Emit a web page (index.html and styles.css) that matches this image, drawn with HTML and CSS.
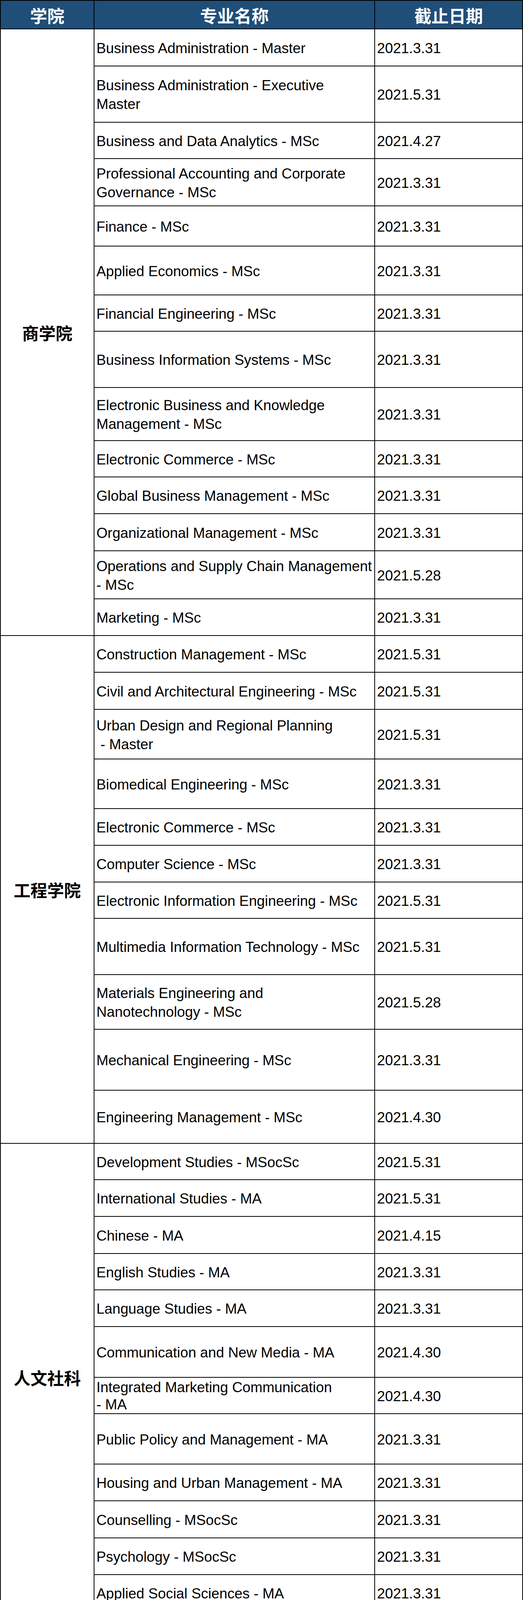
FILE: index.html
```html
<!DOCTYPE html>
<html lang="zh-CN">
<head>
<meta charset="utf-8">
<title>专业申请截止日期</title>
<link rel="stylesheet" href="styles.css">
</head>
<body>
<table class="deadlines">
  <colgroup>
    <col class="c-school">
    <col class="c-name">
    <col class="c-date">
  </colgroup>
  <thead>
    <tr class="head-row">
      <th>学院</th>
      <th>专业名称</th>
      <th>截止日期</th>
    </tr>
  </thead>
  <tbody>
    <tr class="h95"><td class="grp grp-lg" rowspan="14">商学院</td><td class="name">Business Administration - Master</td><td class="date">2021.3.31</td></tr>
    <tr class="h144"><td class="name">Business Administration - Executive<br>Master</td><td class="date">2021.5.31</td></tr>
    <tr class="h93"><td class="name">Business and Data Analytics - MSc</td><td class="date">2021.4.27</td></tr>
    <tr class="h121"><td class="name">Professional Accounting and Corporate<br>Governance - MSc</td><td class="date">2021.3.31</td></tr>
    <tr class="h103"><td class="name">Finance - MSc</td><td class="date">2021.3.31</td></tr>
    <tr class="h125"><td class="name">Applied Economics - MSc</td><td class="date">2021.3.31</td></tr>
    <tr class="h93"><td class="name">Financial Engineering - MSc</td><td class="date">2021.3.31</td></tr>
    <tr class="h144"><td class="name">Business Information Systems - MSc</td><td class="date">2021.3.31</td></tr>
    <tr class="h136"><td class="name">Electronic Business and Knowledge<br>Management - MSc</td><td class="date">2021.3.31</td></tr>
    <tr class="h93"><td class="name">Electronic Commerce - MSc</td><td class="date">2021.3.31</td></tr>
    <tr class="h94"><td class="name">Global Business Management - MSc</td><td class="date">2021.3.31</td></tr>
    <tr class="h95"><td class="name">Organizational Management - MSc</td><td class="date">2021.3.31</td></tr>
    <tr class="h123"><td class="name">Operations and Supply Chain Management<br>- MSc</td><td class="date">2021.5.28</td></tr>
    <tr class="h94"><td class="name">Marketing - MSc</td><td class="date">2021.3.31</td></tr>

    <tr class="h94"><td class="grp grp-lg" rowspan="11">工程学院</td><td class="name">Construction Management - MSc</td><td class="date">2021.5.31</td></tr>
    <tr class="h95"><td class="name">Civil and Architectural Engineering - MSc</td><td class="date">2021.5.31</td></tr>
    <tr class="h127"><td class="name">Urban Design and Regional Planning<br>&nbsp;- Master</td><td class="date">2021.5.31</td></tr>
    <tr class="h127"><td class="name">Biomedical Engineering - MSc</td><td class="date">2021.3.31</td></tr>
    <tr class="h94"><td class="name">Electronic Commerce - MSc</td><td class="date">2021.3.31</td></tr>
    <tr class="h94"><td class="name">Computer Science - MSc</td><td class="date">2021.3.31</td></tr>
    <tr class="h93"><td class="name">Electronic Information Engineering - MSc</td><td class="date">2021.5.31</td></tr>
    <tr class="h144"><td class="name">Multimedia Information Technology - MSc</td><td class="date">2021.5.31</td></tr>
    <tr class="h140"><td class="name">Materials Engineering and<br>Nanotechnology - MSc</td><td class="date">2021.5.28</td></tr>
    <tr class="h156"><td class="name">Mechanical Engineering - MSc</td><td class="date">2021.3.31</td></tr>
    <tr class="h136"><td class="name">Engineering Management - MSc</td><td class="date">2021.4.30</td></tr>

    <tr class="h93"><td class="grp grp-lg" rowspan="12">人文社科</td><td class="name">Development Studies - MSocSc</td><td class="date">2021.5.31</td></tr>
    <tr class="h94"><td class="name">International Studies - MA</td><td class="date">2021.5.31</td></tr>
    <tr class="h95"><td class="name">Chinese - MA</td><td class="date">2021.4.15</td></tr>
    <tr class="h93"><td class="name">English Studies - MA</td><td class="date">2021.3.31</td></tr>
    <tr class="h94"><td class="name">Language Studies - MA</td><td class="date">2021.3.31</td></tr>
    <tr class="h130"><td class="name">Communication and New Media - MA</td><td class="date">2021.4.30</td></tr>
    <tr class="h93"><td class="name tight">Integrated Marketing Communication<br>- MA</td><td class="date">2021.4.30</td></tr>
    <tr class="h129"><td class="name">Public Policy and Management - MA</td><td class="date">2021.3.31</td></tr>
    <tr class="h94"><td class="name">Housing and Urban Management - MA</td><td class="date">2021.3.31</td></tr>
    <tr class="h95"><td class="name">Counselling - MSocSc</td><td class="date">2021.3.31</td></tr>
    <tr class="h94"><td class="name">Psychology - MSocSc</td><td class="date">2021.3.31</td></tr>
    <tr class="h94"><td class="name">Applied Social Sciences - MA</td><td class="date">2021.3.31</td></tr>

    <tr class="h95"><td class="grp grp-lg" rowspan="2">理学院</td><td class="name">Chemistry - MSc</td><td class="date">2021.3.31</td></tr>
    <tr class="h94"><td class="name">Applied Physics - MSc</td><td class="date">2021.3.31</td></tr>

    <tr class="h94"><td class="grp grp-md" rowspan="2">创意媒体</td><td class="name">Creative Media - MFA</td><td class="date">2021.4.30</td></tr>
    <tr class="h94"><td class="name">Creative Media - MA</td><td class="date">2021.4.30</td></tr>

    <tr class="h130"><td class="grp grp-md">数据科学</td><td class="name">Data Science - MSc</td><td class="date">2021.4.30</td></tr>

    <tr class="h129"><td class="grp grp-md">能源与环境</td><td class="name">Energy and Environment - MSc</td><td class="date">2021.3.31</td></tr>

    <tr class="h94"><td class="grp grp-md" rowspan="3">法学院</td><td class="name">Arbitration and Dispute Resolution - LLM</td><td class="date">2021.5.31</td></tr>
    <tr class="h94"><td class="name">Juris Doctor</td><td class="date">2021.5.31</td></tr>
    <tr class="h94"><td class="name">Laws - Master</td><td class="date">2021.5.14</td></tr>

    <tr class="h152"><td class="grp grp-sm">赛马会兽医<br>与生命科学</td><td class="name">Health Sciences and Management - MSc</td><td class="date">2021.3.31</td></tr>
  </tbody>
</table>
</body>
</html>
```

FILE: styles.css
```css
html, body {
  margin: 0;
  padding: 0;
  background: #ffffff;
}

body {
  font-family: "Liberation Sans", Arial, "Noto Sans CJK SC", sans-serif;
  color: #000000;
}

.deadlines {
  width: 1340px;
  table-layout: fixed;
  border-collapse: separate;
  border-spacing: 0;
  border-top: 2px solid #000;
  border-left: 2px solid #000;
}

.c-school { width: 240px; }
.c-name { width: 719px; }
.c-date { width: 379px; }

.deadlines th,
.deadlines td {
  border-right: 2px solid #000;
  border-bottom: 2px solid #000;
  vertical-align: middle;
  overflow: hidden;
}

.head-row { height: 73px; }

.deadlines th {
  background: #1f4e79;
  color: #ffffff;
  font-family: "Noto Sans CJK SC", sans-serif;
  font-weight: 700;
  font-size: 44px;
  line-height: 50px;
  text-align: center;
  padding: 2px 0 0 0;
}

.name,
.date {
  font-family: "Liberation Sans", Arial, sans-serif;
  font-size: 36.8px;
  line-height: 48px;
  text-align: left;
  white-space: nowrap;
  padding: 4px 2px 0 5px;
}

.name.tight {
  line-height: 44px;
  padding-top: 2px;
}

.grp {
  font-family: "Noto Sans CJK SC", sans-serif;
  font-weight: 700;
  text-align: center;
  padding: 0;
  white-space: nowrap;
}

.grp-lg { font-size: 43px; line-height: 50px; }
.grp-md { font-size: 38px; line-height: 50px; }
.grp-sm { font-size: 34px; line-height: 50px; }

.h93 { height: 93px; }
.h94 { height: 94px; }
.h95 { height: 95px; }
.h103 { height: 103px; }
.h121 { height: 121px; }
.h123 { height: 123px; }
.h125 { height: 125px; }
.h127 { height: 127px; }
.h129 { height: 129px; }
.h130 { height: 130px; }
.h136 { height: 136px; }
.h140 { height: 140px; }
.h144 { height: 144px; }
.h152 { height: 152px; }
.h156 { height: 156px; }
```
